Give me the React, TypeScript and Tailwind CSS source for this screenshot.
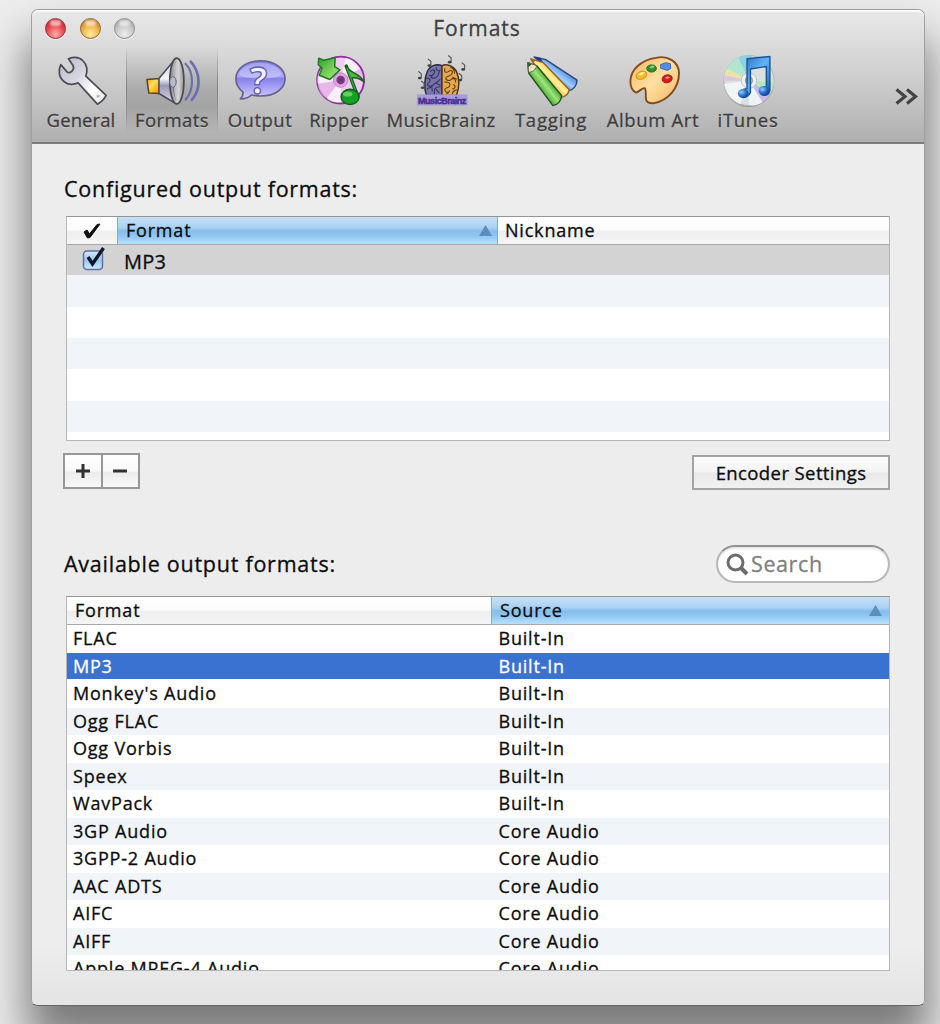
import type { ReactNode } from 'react';

const line = { strokeLinejoin: 'round', strokeLinecap: 'round' } as const;

function WrenchIcon() {
  return (
    <svg width="60" height="56" viewBox="0 0 60 56">
      <defs>
        <linearGradient id="steel" x1="0" y1="0" x2="1" y2="1">
          <stop offset="0" stopColor="#b9b9c9" />
          <stop offset=".4" stopColor="#d5d5e2" />
          <stop offset=".7" stopColor="#ffffff" />
          <stop offset="1" stopColor="#e2e2ea" />
        </linearGradient>
      </defs>
      <path
        {...line}
        d="M17 5C22 3 28 3 32 7C36 11 37 17 35 23L56 43C54 47 51 50 47 52L27 30C22 32 17 32 13 29C7 25 6 17 9 11L15.500 18.500C18 20.500 23.500 17.500 22 12.500Z"
        fill="url(#steel)"
        stroke="#4e4c55"
        strokeWidth="1.800"
      />
      <path d="M45.500 43.500l3-1.500 1.500 1.500-2.500 2z" fill="#b4b4bd" />
    </svg>
  );
}

function SpeakerIcon() {
  return (
    <svg width="60" height="56" viewBox="0 0 60 56">
      <defs>
        <linearGradient id="cone" x1="0" y1="0" x2="0" y2="1">
          <stop offset="0" stopColor="#cfcfe0" />
          <stop offset=".45" stopColor="#f5f5fb" />
          <stop offset=".6" stopColor="#9a9ab8" />
          <stop offset="1" stopColor="#d9d9e4" />
        </linearGradient>
        <linearGradient id="magnet" x1="0" y1="0" x2="1" y2="1">
          <stop offset="0" stopColor="#f09a14" />
          <stop offset=".4" stopColor="#ffe05a" />
          <stop offset=".6" stopColor="#ffc52e" />
          <stop offset="1" stopColor="#f08a10" />
        </linearGradient>
        <linearGradient id="rim" x1="0" y1="0" x2="1" y2="0">
          <stop offset="0" stopColor="#8e8e94" />
          <stop offset=".6" stopColor="#d6d6d9" />
          <stop offset="1" stopColor="#98989d" />
        </linearGradient>
      </defs>
      <path {...line} d="M4 26.500L17 25.500V41L6 40.500Z" fill="url(#magnet)" stroke="#5a4328" strokeWidth="1.600" />
      <path {...line} d="M16.500 25.500L34 4.500V51.500L16.500 41Z" fill="url(#cone)" stroke="#4c4a55" strokeWidth="1.600" />
      <ellipse cx="35" cy="28" rx="7.300" ry="23.700" fill="url(#rim)" stroke="#4c4a50" strokeWidth="1.800" />
      <path d="M35 7C31 12 30 20 30 24L35 28L32 35C32 42 34 48 36 49C29 46 28 12 35 7Z" fill="#77777f" />
      <ellipse cx="31" cy="29" rx="3.300" ry="5.500" fill="#b8bccd" stroke="#686b7c" />
      <g fill="none" stroke="#6a6fae" {...line}>
        <path d="M44 10C53 19 53 37 44 47.500" strokeWidth="2.200" />
        <path d="M49.500 8C60 20 60 37 50.500 47.500" strokeWidth="2.800" />
      </g>
    </svg>
  );
}

function BubbleIcon() {
  return (
    <svg width="60" height="56" viewBox="0 0 60 56">
      <defs>
        <linearGradient id="bubble" x1="0" y1="0" x2="0" y2="1">
          <stop offset="0" stopColor="#7a7ae0" />
          <stop offset=".42" stopColor="#a9a6f8" />
          <stop offset=".46" stopColor="#8581ea" />
          <stop offset="1" stopColor="#d4ccff" />
        </linearGradient>
      </defs>
      <path
        {...line}
        d="M30.500 7C45 7 56 15 56 25.500C56 36.500 45 43.500 31 43.500C27 43.500 24 43 21 42.500C18 46 13.500 46.500 9.500 46.500C12 44.500 12.500 42 12.500 39.500C7.500 36 5 31 5 25.500C5 15 16 7 30.500 7Z"
        fill="url(#bubble)"
        stroke="#65628e"
        strokeWidth="1.700"
      />
      <path d="M30 9C42 9 51 14 53 21C46 27 14 27 8 21C10 14 19 9 30 9Z" fill="#ffffff" opacity=".28" />
      <text
        x="28.500"
        y="41"
        textAnchor="middle"
        fontFamily="Open Sans, sans-serif"
        fontSize="38"
        fontWeight="700"
        fill="#f2f0ff"
        stroke="#615cae"
        strokeWidth="1.300"
      >
        ?
      </text>
    </svg>
  );
}

function RipperIcon() {
  return (
    <svg width="60" height="56" viewBox="0 0 60 56">
      <defs>
        <linearGradient id="leaf" x1="0" y1="0" x2="1" y2="1">
          <stop offset="0" stopColor="#2fa52a" />
          <stop offset="1" stopColor="#b4f088" />
        </linearGradient>
      </defs>
      <circle cx="31.700" cy="27" r="24.300" fill="#f0cdf0" stroke="#8f2f9c" strokeWidth="2" />
      <path d="M31.700 27L12 14C8 20 7 25 8 31ZM31.700 27L17 46C21 50 27 51 32 50ZM31.700 27L52 15C48 9 43 5 37 4Z" fill="#fff" opacity=".65" />
      <path d="M31.700 27L8 31C9 38 12 43 17 46ZM31.700 27L55 23C54 19 53 17 52 15Z" fill="#e3aee6" opacity=".7" />
      <circle cx="31.700" cy="27" r="7.500" fill="#dfa2e2" stroke="#c586cb" />
      <circle cx="31.700" cy="27" r="3.500" fill="#55485a" stroke="#8a2e98" strokeWidth="1.800" />
      <path {...line} d="M9 4.500L14 6.500L26 4L25.500 13L31 16.500L20.500 26.500L9.500 22L12.500 14.500L8.500 11Z" fill="url(#leaf)" stroke="#207925" strokeWidth="1.600" />
      <path {...line} d="M37.500 12.500L49.500 44" fill="none" stroke="#155f1c" strokeWidth="3.600" />
      <path {...line} d="M37.500 12.500C41 20 52 20 56 29C51 25 47 24 43 25" fill="#4abc43" stroke="#155f1c" strokeWidth="1.600" />
      <path {...line} d="M38.500 15L49 43" fill="none" stroke="#3aa63b" strokeWidth="1.400" />
      <ellipse cx="41.500" cy="44.500" rx="9.300" ry="7.800" fill="#16a025" stroke="#106019" strokeWidth="1.600" />
      <ellipse cx="39" cy="41.500" rx="5" ry="2.700" fill="#7ddc72" opacity=".75" />
    </svg>
  );
}

function BrainIcon() {
  return (
    <svg width="60" height="56" viewBox="0 0 60 56">
      <path d="M31 43H15C12 35 13 25 15.500 19C18 12 25 10 31 12Z" fill="#7773ae" stroke="#292638" strokeWidth="1.500" />
      <path d="M31 43H46C49 35 49 25 46 18C43 12 36 10 31 12Z" fill="#e5a94f" stroke="#4b351b" strokeWidth="1.500" />
      <g fill="none" strokeWidth="1.100" {...line}>
        <path
          d="M19 18c4-4 6 1 3 3s-4 4 1 4 4-6 6-8M15 25c4 0 5 3 2 5s2 5 5 2 6-3 7-6M16 36c3-2 5-2 5 2M23 41c-1-5 2-7 6-7M25 14c0 3 2 4 4 3M25 30c2 2 3 3 4 2M17 33l4 1M25 37l3 3M18 22l3 1"
          stroke="#33315a"
        />
        <path
          d="M34 15c-1 4 1 5 4 3s5 0 3 3-6 1-6 4 4 3 6 1 5 1 4 3M34 29c4 0 6 1 5 4s-5 1-5 4 4 4 5 1M43 32c3 1 1 5-1 4M42 41c0-3 2-3 4-4M40 14c3 1 4 3 4 6M42 24l4 2M36 41l2-1"
          stroke="#5d3b12"
        />
      </g>
      <g fill="none" stroke="#555" strokeWidth="1.200">
        <path d="M16.500 5l3 2.500v4M6.500 18l3 2.500v4M9.500 28l3 2.500v4M37.500 1.500l3 2.500v4M51.500 9l3 2.500v4M48.500 20l3 2.500v4" />
      </g>
      <g fill="#444">
        <ellipse cx="18" cy="12" rx="2" ry="1.400" />
        <ellipse cx="8" cy="25" rx="2" ry="1.400" />
        <ellipse cx="11" cy="35" rx="2" ry="1.400" />
        <ellipse cx="39" cy="8.500" rx="2" ry="1.400" />
        <ellipse cx="53" cy="16" rx="2" ry="1.400" />
        <ellipse cx="50" cy="27" rx="2" ry="1.400" />
      </g>
      <rect x="5" y="42" width="52.500" height="11.500" fill="#a69bdb" />
      <text
        x="31.200"
        y="51.500"
        textAnchor="middle"
        fontFamily="Liberation Sans, sans-serif"
        fontWeight="700"
        fontSize="9.500"
        textLength="50"
        fill="#4c2e8e"
        stroke="#4c2e8e"
        strokeWidth=".5"
      >
        MusicBrainz
      </text>
    </svg>
  );
}

function PencilsIcon() {
  return (
    <svg width="60" height="56" viewBox="0 0 60 56" {...line}>
      <defs>
        <linearGradient id="bluePencil" x1="0" y1="1" x2="1" y2="0">
          <stop offset=".35" stopColor="#3474ce" />
          <stop offset=".5" stopColor="#a4ceff" />
          <stop offset=".7" stopColor="#3a7bd9" />
        </linearGradient>
        <linearGradient id="yellowPencil" x1="0" y1="1" x2="1" y2="0">
          <stop offset=".35" stopColor="#f2a51b" />
          <stop offset=".52" stopColor="#fff09a" />
          <stop offset=".7" stopColor="#ffc42b" />
        </linearGradient>
        <linearGradient id="greenPencil" x1="0" y1="1" x2="1" y2="0">
          <stop offset=".3" stopColor="#24891e" />
          <stop offset=".5" stopColor="#9fe579" />
          <stop offset=".65" stopColor="#2b9b22" />
        </linearGradient>
      </defs>
      <path d="M12.500 3L25 6L57 27C57 33 53 37 49 38L22 10Z" fill="url(#bluePencil)" stroke="#294c80" strokeWidth="1.500" />
      <path d="M12.500 3L19 4L22 9L15.500 6Z" fill="#26328e" />
      <path d="M9 5L22 9L49 37C48 42 45 44 41 45L15 14Z" fill="url(#yellowPencil)" stroke="#8f6125" strokeWidth="1.500" />
      <path d="M9 5L14 6L12 9Z" fill="#b35f1b" />
      <path d="M6 9L15 12L41 43C41 48 37 53 32 53.500L7 20Z" fill="url(#greenPencil)" stroke="#285325" strokeWidth="1.500" />
      <path d="M6 9L15 12C15 15 12 19 7 19Z" fill="#efe0be" stroke="#5b6848" />
      <path d="M6 9L10 10.500L6.500 14Z" fill="#345b2a" />
    </svg>
  );
}

function PaletteIcon() {
  return (
    <svg width="60" height="56" viewBox="0 0 60 56">
      <defs>
        <linearGradient id="wood" x1="0" y1="0" x2="1" y2="1">
          <stop offset="0" stopColor="#f2b45d" />
          <stop offset=".5" stopColor="#ffe0a0" />
          <stop offset="1" stopColor="#f0b565" />
        </linearGradient>
      </defs>
      <path
        {...line}
        d="M33 4C45 1 57 8 57 20C57 35 46 48 31 51C25 51.500 22.500 49 22.500 45C22.500 41 23 37 21.500 35.500C19 34.500 16 39 12.500 40C8 38 6.500 33 6.500 28C7 15 19 6 33 4Z"
        fill="url(#wood)"
        stroke="#87491f"
        strokeWidth="2"
      />
      <ellipse cx="18" cy="22" rx="5.700" ry="4" transform="rotate(-22 18 22)" fill="#f5bd2b" stroke="#d78e22" />
      <path d="M14 22l4-3 4 0-4 3z" fill="#fff0ac" />
      <ellipse cx="28.500" cy="15" rx="5" ry="3.700" fill="#289724" stroke="#1d701d" />
      <path d="M38 11L43 9L48 10L48.500 15L45 17L38.500 15Z" fill="#548ce8" stroke="#3c65ad" {...line} />
      <ellipse cx="44.700" cy="25.700" rx="5.300" ry="4" transform="rotate(-12 44.700 25.700)" fill="#dc1c18" stroke="#96241c" />
      <path d="M26 14l3-2 3 1-3 2zM42 25l3-2 3 1-3 2z" fill="#fff" opacity=".5" />
    </svg>
  );
}

function ITunesIcon() {
  return (
    <svg width="60" height="56" viewBox="0 0 60 56">
      <defs>
        <linearGradient id="note" x1="0" y1="0" x2="1" y2="1">
          <stop offset="0" stopColor="#2066b8" />
          <stop offset=".5" stopColor="#62b5f5" />
          <stop offset="1" stopColor="#174fa0" />
        </linearGradient>
        <radialGradient id="drop" cx=".35" cy=".35" r=".7">
          <stop offset="0" stopColor="#8cd3ff" />
          <stop offset=".6" stopColor="#286cc8" />
          <stop offset="1" stopColor="#173f99" />
        </radialGradient>
      </defs>
      <circle cx="31" cy="29" r="26" fill="#8c8c8c" opacity=".7" />
      <circle cx="31" cy="27.500" r="26" fill="#d9e2e3" stroke="#aab5b8" />
      <path d="M31 27.500L8 15C11 10 15 6 20 4Z" fill="#b2e7cf" />
      <path d="M31 27.500L5.500 22C6 19 7 17 8 15Z" fill="#ece4a5" />
      <path d="M31 27.500L5 28C5 26 5 24 5.500 22Z" fill="#dec6dc" />
      <path d="M31 27.500L20 4C25 2 30 1.500 34 2Z" fill="#8bd4e5" />
      <path d="M31 27.500L5 31C8 43 14 49 22 52Z" fill="#fff" opacity=".65" />
      <path d="M31 27.500L57 29C56 34 55 37 53 41Z" fill="#b5e9b9" />
      <path d="M31 27.500L53 41C51 45 48 48 45 50Z" fill="#c9b7e9" />
      <path d="M31 27.500L45 50C40 53 35 54 31 53Z" fill="#eef4f5" />
      <circle cx="31" cy="27.500" r="8" fill="#eff0f2" stroke="#b8c0c3" />
      <circle cx="31" cy="27.500" r="3.800" fill="#bcbcbc" stroke="#8c9599" />
      <path
        {...line}
        d="M29 5L52.700 2.500V38C52 42 48 44 44 42C42 39 44 35 49 34V13L32.500 15.500V40C31 44 27 46 23 44C20 41 23 36 29 36Z"
        fill="url(#note)"
        stroke="#1d559d"
        strokeWidth="1.500"
      />
      <ellipse cx="25" cy="41" rx="5.500" ry="4.800" fill="url(#drop)" />
      <ellipse cx="46.500" cy="38" rx="5.500" ry="4.800" fill="url(#drop)" />
    </svg>
  );
}

type Tool = { label: string; width: string; track: string; icon: ReactNode; active?: boolean };

const tools: Tool[] = [
  { label: 'General', width: 'w-[90px]', track: 'tracking-[0.1px]', icon: <WrenchIcon /> },
  { label: 'Formats', width: 'w-[92px]', track: 'tracking-[0.4px]', icon: <SpeakerIcon />, active: true },
  { label: 'Output', width: 'w-[84px]', track: 'tracking-[0.5px]', icon: <BubbleIcon /> },
  { label: 'Ripper', width: 'w-[74px]', track: 'tracking-[0.5px]', icon: <RipperIcon /> },
  { label: 'MusicBrainz', width: 'w-[130px]', track: 'tracking-[0.4px]', icon: <BrainIcon /> },
  { label: 'Tagging', width: 'w-[90px]', track: 'tracking-[0.8px]', icon: <PencilsIcon /> },
  { label: 'Album Art', width: 'w-[114px]', track: 'tracking-[0.65px]', icon: <PaletteIcon /> },
  { label: 'iTunes', width: 'w-[76px]', track: 'tracking-[0.7px]', icon: <ITunesIcon /> },
];

const formats: [string, string][] = [
  ['FLAC', 'Built-In'],
  ['MP3', 'Built-In'],
  ["Monkey's Audio", 'Built-In'],
  ['Ogg FLAC', 'Built-In'],
  ['Ogg Vorbis', 'Built-In'],
  ['Speex', 'Built-In'],
  ['WavPack', 'Built-In'],
  ['3GP Audio', 'Core Audio'],
  ['3GPP-2 Audio', 'Core Audio'],
  ['AAC ADTS', 'Core Audio'],
  ['AIFC', 'Core Audio'],
  ['AIFF', 'Core Audio'],
  ['Apple MPEG-4 Audio', 'Core Audio'],
];

const activeHead = 'bg-[linear-gradient(#c8e0f7_0%,#a9d1f3_40%,#86bdec_52%,#91c6f2_70%,#b5e1fd_100%)]';
const plainHead = 'bg-[linear-gradient(#ffffff_0%,#fbfbfb_48%,#eeeeee_54%,#f5f5f5_100%)]';

function SortArrow() {
  return (
    <svg className="-mt-px" width="13" height="11" viewBox="0 0 13 11">
      <path d="M6.500 0L13 11H0Z" fill="#5b8dbd" />
    </svg>
  );
}

function Light({ tone }: { tone: string }) {
  return (
    <span className={`flex size-[21px] justify-center rounded-full border-[1.500px] shadow-[0_1px_1px_#ffffffb0] ${tone}`}>
      <span className="mt-px h-[6px] w-[11px] rounded-full bg-white/60 blur-[1px]" />
    </span>
  );
}

function TitleBar() {
  return (
    <div className="flex h-[36px] items-center pt-[1px]">
      <div className="flex w-[110px] gap-[13.500px] pl-[13px]">
        <Light tone="border-[#8e3034] bg-[radial-gradient(circle_at_50%_80%,#ffb0ac_0%,#e9444b_50%,#b5232c_90%)]" />
        <Light tone="border-[#93642a] bg-[radial-gradient(circle_at_50%_80%,#fff0a0_0%,#eeb04b_50%,#b96f1e_90%)]" />
        <Light tone="border-[#8c8c8c] bg-[radial-gradient(circle_at_50%_80%,#eeeeee_0%,#c8c9c9_50%,#999999_90%)]" />
      </div>
      <div className="flex-1 pr-[112px] text-center text-[21px] tracking-[1px] text-[#3f3f3f]">Formats</div>
    </div>
  );
}

const divider = 'w-px shrink-0 bg-[linear-gradient(#99999900,#808080_50%,#99999900)]';

function Toolbar() {
  return (
    <div className="flex h-[86px] pl-[4px]">
      {tools.map((t) => (
        <div
          key={t.label}
          className={`flex shrink-0 justify-between ${t.width} ${
            t.active ? 'bg-[linear-gradient(#00000000_0%,#00000026_50%,#00000026_70%,#00000000_100%)]' : ''
          }`}
        >
          <span className={t.active ? divider : ''} />
          <div className="flex min-w-0 flex-col items-center pt-[8px]">
            {t.icon}
            <span className={`whitespace-nowrap text-[18.500px] leading-[24px] text-[#3d3d3d] [text-shadow:0_1px_0_#ffffff60] ${t.track}`}>
              {t.label}
            </span>
          </div>
          <span className={t.active ? divider : ''} />
        </div>
      ))}
      <div className="flex flex-1 items-start justify-end pr-[5px] pt-[42px]">
        <svg width="24" height="17" viewBox="0 0 24 17" fill="none" stroke="#444444" strokeWidth="3.200">
          <path d="M1.500 1.500L10 8.500L1.500 15.500M12 1.500L20.500 8.500L12 15.500" />
        </svg>
      </div>
    </div>
  );
}

function ConfiguredTable() {
  return (
    <div className="mt-[11px] flex h-[225px] w-[824px] flex-col overflow-hidden border border-[#b4b6b8] border-t-[#949596] bg-white">
      <div className="flex h-[28px] shrink-0 border-b border-[#a6a8aa] text-[18px] leading-[26px]">
        <div className={`flex w-[50px] items-center justify-center ${plainHead}`}>
          <svg width="18" height="16" viewBox="0 0 18 16" fill="none">
            <path d="M1 9L4 7L6.500 11L14 1.500L17 1L7 14.500L4.500 15Z" fill="#111" stroke="#111" />
          </svg>
        </div>
        <div className={`flex w-[381px] justify-between border-x border-[#83a9da] pl-[8px] pr-[5px] ${activeHead}`}>
          <span className="tracking-[0.8px]">Format</span>
          <span className="flex items-center">
            <SortArrow />
          </span>
        </div>
        <div className={`flex-1 pl-[7px] tracking-[0.8px] ${plainHead}`}>Nickname</div>
      </div>
      <div className="flex h-[30px] shrink-0 items-center bg-[#d3d3d3]">
        <svg className="-mt-[3px] ml-[14px]" width="26" height="26" viewBox="0 0 26 26" fill="none">
          <defs>
            <linearGradient id="box" x1="0" y1="0" x2="0" y2="1">
              <stop offset="0" stopColor="#d9ebfb" />
              <stop offset=".5" stopColor="#98c6f1" />
              <stop offset="1" stopColor="#c9f1ff" />
            </linearGradient>
          </defs>
          <rect x="2.500" y="5" width="19" height="18.500" rx="3.500" fill="url(#box)" stroke="#656da2" strokeWidth="1.500" />
          <path d="M7 11L11.500 18L22.500 2" stroke="#101826" strokeWidth="3.400" />
        </svg>
        <span className="ml-[17px] mt-[3px] text-[20px] tracking-[0.3px]">MP3</span>
      </div>
      <div className="h-[32px] shrink-0 bg-[#f1f5f9]" />
      <div className="h-[31px] shrink-0" />
      <div className="h-[31px] shrink-0 bg-[#f1f5f9]" />
      <div className="h-[32px] shrink-0" />
      <div className="h-[31px] shrink-0 bg-[#f1f5f9]" />
    </div>
  );
}

function AvailableTable() {
  return (
    <div className="mt-[13px] flex h-[375px] w-[824px] flex-col overflow-hidden border border-[#b4b6b8] border-t-[#949596] bg-white text-[18px]">
      <div className="flex h-[28px] shrink-0 border-b border-[#a6a8aa] leading-[26px]">
        <div className={`w-[424px] pl-[8px] tracking-[0.8px] ${plainHead}`}>Format</div>
        <div className={`flex flex-1 justify-between border-l border-[#83a9da] pl-[8px] pr-[7px] ${activeHead}`}>
          <span className="tracking-[0.8px]">Source</span>
          <span className="flex items-center">
            <SortArrow />
          </span>
        </div>
      </div>
      {formats.map(([name, source], i) => (
        <div
          key={name}
          className={`flex h-[27.530px] shrink-0 tracking-[0.8px] ${
            i === 1
              ? 'border-b border-white bg-[#3a72d2] bg-clip-padding leading-[27px] text-white'
              : i % 2
                ? 'bg-[#f1f5f9] leading-[27px]'
                : 'leading-[27px]'
          }`}
        >
          <span className="w-[431.500px] pl-[6px]">{name}</span>
          <span>{source}</span>
        </div>
      ))}
    </div>
  );
}

export default function App() {
  return (
    <div className="flex h-[1024px] w-[940px] items-start overflow-hidden bg-[#ececec] pl-[31px] pt-[9px] font-['Open_Sans',sans-serif] text-[#0c0c0c] [-webkit-text-stroke:0.3px]">
      <div className="flex h-[997px] w-[894px] shrink-0 flex-col overflow-hidden rounded-t-[7px] rounded-b-[6px] border border-[#a0a0a0] border-b-[#666] bg-[linear-gradient(#ededed_0%,#ededed_94%,#e5e5e5_99%)] shadow-[0_34px_44px_4px_#0000007c]">
        <div className="flex h-[134px] shrink-0 flex-col rounded-t-[6px] border-b-2 border-[#7c7c7c] bg-[linear-gradient(#e8e8e8,#cfcfcf_50%,#afafaf)] shadow-[inset_0_2px_0_#fafafa]">
          <TitleBar />
          <Toolbar />
        </div>
        <div className="flex flex-col pl-[34px] pr-[34px]">
          <h2 className="-ml-[2px] mt-[29px] text-[21.500px] leading-[32px] tracking-[0.75px]">Configured output formats:</h2>
          <ConfiguredTable />
          <div className="-ml-[3px] mt-[12px] flex w-[827px] items-start justify-between">
            <div className="flex h-[36px] w-[77px] border-2 border-[#979797] bg-[linear-gradient(#fff_0%,#f8f8f8_50%,#ececec_53%,#f8f8f8_100%)]">
              <div className="flex w-[38px] items-center justify-center border-r-2 border-[#979797]">
                <svg width="14" height="14" viewBox="0 0 14 14" stroke="#303030" strokeWidth="3">
                  <path d="M0 7H14M7 0V14" />
                </svg>
              </div>
              <div className="flex flex-1 items-center justify-center pr-[2px]">
                <svg width="14" height="14" viewBox="0 0 14 14" stroke="#303030" strokeWidth="3">
                  <path d="M0 7H14" />
                </svg>
              </div>
            </div>
            <button className="mt-[2px] h-[35px] w-[198px] border-2 border-[#a3a3a3] bg-[linear-gradient(#fbfbfb_0%,#f4f4f4_48%,#e8e8e8_52%,#f2f2f2_100%)] pb-px text-[18.500px] leading-[29px] tracking-[0.4px]">
              Encoder Settings
            </button>
          </div>
          <div className="mt-[55px] flex w-[824px] items-center justify-between">
            <h2 className="-ml-[2px] text-[21.500px] leading-[38px] tracking-[0.75px]">Available output formats:</h2>
            <div className="flex h-[38px] w-[174px] items-center rounded-full border-2 border-[#b8b8b8] border-t-[#929292] bg-white pl-[8px] text-[#808080] shadow-[inset_0_2px_2px_#00000018]">
              <svg width="23" height="23" viewBox="0 0 23 23" fill="none" stroke="#6c6c6c" strokeWidth="3">
                <circle cx="9.500" cy="9.500" r="7.500" />
                <path d="M14.500 14.500L21 21" strokeWidth="4" />
              </svg>
              <span className="ml-[2px] text-[21.500px] leading-[34px] tracking-[0.6px]">Search</span>
            </div>
          </div>
          <AvailableTable />
        </div>
      </div>
    </div>
  );
}
